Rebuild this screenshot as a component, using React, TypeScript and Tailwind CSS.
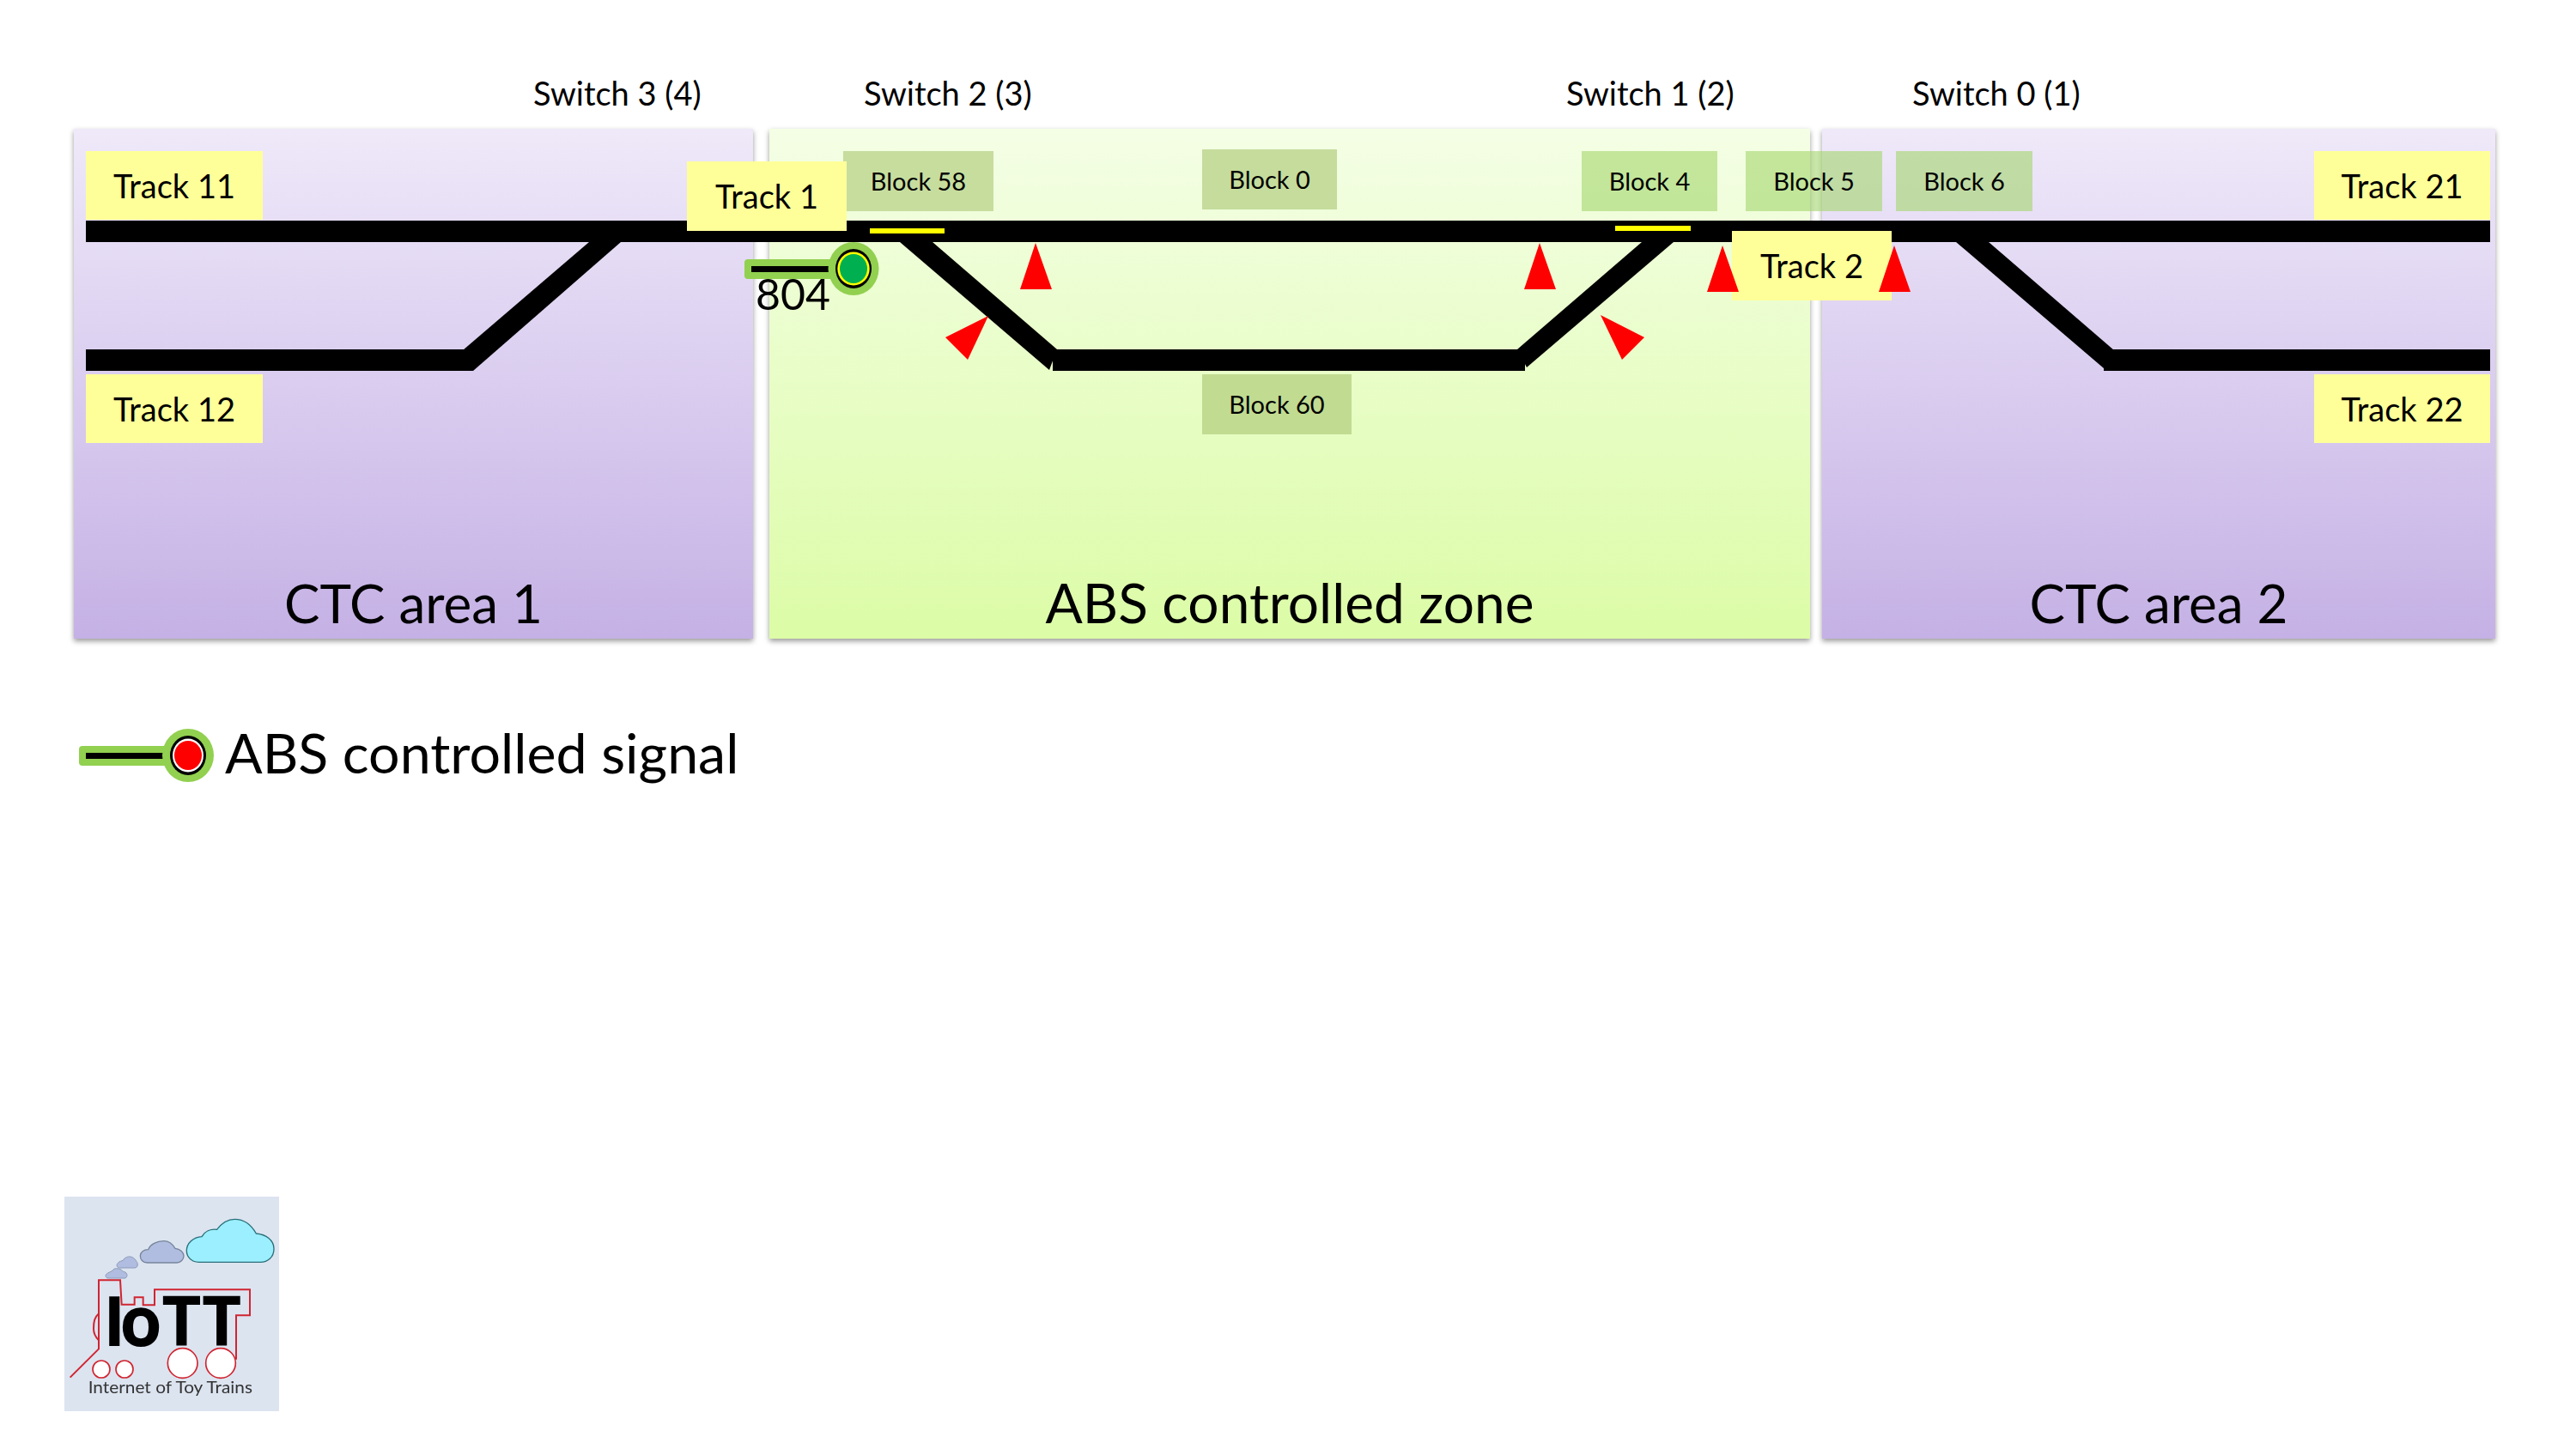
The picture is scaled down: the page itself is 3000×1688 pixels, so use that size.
// Track plan for the ABS zone between two CTC areas
const switches = [
  { text: 'Switch 3 (4)', className: 'left-[621px]' },
  { text: 'Switch 2 (3)', className: 'left-[1006px]' },
  { text: 'Switch 1 (2)', className: 'left-[1824px]' },
  { text: 'Switch 0 (1)', className: 'left-[2227px]' },
];

const blocks = [
  { text: 'Block 58', className: 'left-[982px] top-[176px] w-[175px] h-[70px] bg-[#c7dd9e]' },
  { text: 'Block 0', className: 'left-[1400px] top-[174px] w-[157px] h-[70px] bg-[#c5dc9c]' },
  { text: 'Block 60', className: 'left-[1400px] top-[436px] w-[174px] h-[70px] bg-[#c1db91]' },
  { text: 'Block 4', className: 'left-[1842px] top-[176px] w-[158px] h-[70px] bg-[#a3d56c]/60' },
  { text: 'Block 5', className: 'left-[2033px] top-[176px] w-[159px] h-[70px] bg-[#a3d56c]/60' },
  { text: 'Block 6', className: 'left-[2208px] top-[176px] w-[159px] h-[70px] bg-[#a3d56c]/60' },
];

const tracks = [
  { text: 'Track 11', className: 'left-[100px] top-[176px] w-[206px] h-[80px]' },
  { text: 'Track 12', className: 'left-[100px] top-[436px] w-[206px] h-[80px]' },
  { text: 'Track 21', className: 'left-[2695px] top-[176px] w-[205px] h-[80px]' },
  { text: 'Track 22', className: 'left-[2695px] top-[436px] w-[205px] h-[80px]' },
  { text: 'Track 1', className: 'left-[800px] top-[188px] w-[186px] h-[81px]' },
  { text: 'Track 2', className: 'left-[2017px] top-[269px] w-[186px] h-[81px]' },
];

function Signal({ ring, lamp }: { ring: string; lamp: string }) {
  return (
    <svg width="158" height="64" viewBox="0 0 158 64">
      <rect x="0" y="21" width="110" height="23" rx="4" fill="#92d050" />
      <rect x="8" y="29" width="96" height="7" fill="#000" />
      <ellipse cx="127" cy="32" rx="30" ry="31" fill="#92d050" />
      <ellipse cx="127" cy="32" rx="21" ry="23" fill="#000" />
      <ellipse cx="127" cy="32" rx="18" ry="19.5" fill={ring} />
      <ellipse cx="127" cy="32" rx="16" ry="17" fill={lamp} />
    </svg>
  );
}

function Logo() {
  return (
    <svg width="250" height="250" viewBox="45 43 750 750" className="ml-[75px] mt-[474px] blur-[0.5px]">
      <rect x="45" y="43" width="750" height="750" fill="#dce4f0" />
      <path d="M515 272 C485 272 472 250 472 232 C472 205 495 185 525 183 C535 165 555 155 578 158 C595 135 615 122 640 122 C675 122 700 145 715 172 C750 175 777 195 777 225 C777 255 755 272 730 272 Z" fill="#9befff" stroke="#2a6f78" strokeWidth="4" />
      <path d="M335 274 C318 274 310 262 310 250 C310 238 322 228 338 228 C345 210 368 198 392 198 C412 198 425 212 432 224 C450 226 462 238 462 250 C462 264 450 274 438 274 Z" fill="#b0bde0" stroke="#76859c" strokeWidth="4" />
      <path d="M238 292 C228 292 225 282 232 275 C238 268 245 268 250 266 C255 255 270 250 280 254 C290 258 295 265 297 270 C303 275 303 292 290 292 Z" fill="#b0bde0" stroke="#8c9ab8" strokeWidth="3" />
      <path d="M198 328 C188 328 185 315 197 310 C205 305 212 305 218 296 C228 292 245 295 250 305 C262 305 270 320 258 328 Z" fill="#b0bde0" stroke="#8c9ab8" strokeWidth="3" />
      <path d="M65 675 L165 575 L165 335 L240 335 L245 420 L290 420 L290 395 L320 395 L320 422 L360 422 L360 368 L693 368 L693 458 L645 458 L645 612" fill="none" stroke="#d02530" strokeWidth="6" />
      <path d="M165 452 C150 465 147 480 147 505 C147 525 155 535 165 545" fill="none" stroke="#d02530" strokeWidth="6" />
      <text x="180 238 385 525" y="565" fontSize="240" fontWeight="700" fontFamily="'Open Sans',sans-serif" fill="#000">IoTT</text>
      <circle cx="174" cy="646" r="30" fill="#fff" stroke="#d02530" strokeWidth="5" />
      <circle cx="255" cy="646" r="30" fill="#fff" stroke="#d02530" strokeWidth="5" />
      <circle cx="458" cy="625" r="52" fill="#fff" stroke="#d02530" strokeWidth="5" />
      <circle cx="591" cy="625" r="52" fill="#fff" stroke="#d02530" strokeWidth="5" />
      <text x="128" y="730" fontSize="58" fontFamily="Lato,sans-serif" textLength="574" lengthAdjust="spacingAndGlyphs" fill="#333">Internet of Toy Trains</text>
    </svg>
  );
}

export default function App() {
  return (
    <div className="relative flex flex-col w-[3000px] h-[1688px] bg-white text-black font-['Lato',sans-serif] overflow-hidden">
      {/* areas */}
      <div className="flex mt-[150px] ml-[86px] h-[594px]">
        <div className="flex items-end justify-center w-[791px] pb-[5px] bg-gradient-to-b from-[#efe9f9] to-[#c5b1e5] shadow-[0_3px_6px_rgba(0,0,0,0.4)]">
          <span className="text-[62px] leading-[74px]">CTC area 1</span>
        </div>
        <div className="flex items-end justify-center w-[1212px] ml-[19px] pb-[5px] bg-gradient-to-b from-[#f4fee5] to-[#dcfca6] shadow-[0_3px_6px_rgba(0,0,0,0.4)]">
          <span className="text-[64px] leading-[74px]">ABS controlled zone</span>
        </div>
        <div className="flex items-end justify-center w-[784px] ml-[14px] pb-[5px] bg-gradient-to-b from-[#efe9f9] to-[#c5b1e5] shadow-[0_3px_6px_rgba(0,0,0,0.4)]">
          <span className="text-[62px] leading-[74px]">CTC area 2</span>
        </div>
      </div>

      {/* legend */}
      <div className="flex items-center h-[80px] mt-[96px] ml-[92px] gap-[12px]">
        <Signal ring="#fff" lamp="#ff0000" />
        <span className="text-[64.5px] leading-[74px] -translate-y-[4px]">ABS controlled signal</span>
      </div>

      <Logo />

      {/* diagram labels */}
      {switches.map((s) => (
        <div key={s.text} className={`absolute top-[86px] text-[38px] leading-[44px] ${s.className}`}>
          {s.text}
        </div>
      ))}
      {blocks.map((b) => (
        <div key={b.text} className={`absolute flex items-center justify-center text-[29px] ${b.className}`}>
          {b.text}
        </div>
      ))}

      {/* rails */}
      <svg width="3000" height="1688" viewBox="0 0 3000 1688" className="absolute left-0 top-0">
        <rect x="100" y="257" width="2800" height="25" fill="#000" />
        <rect x="100" y="407" width="451" height="25" fill="#000" />
        <rect x="1226" y="407" width="550" height="25" fill="#000" />
        <rect x="2450" y="407" width="450" height="25" fill="#000" />
        <polygon points="686,282 723,282 551,432 539,408" fill="#000" />
        <polygon points="1048,282 1086,282 1231,407 1222,431" fill="#000" />
        <polygon points="1912,282 1949,282 1778,428 1767,407" fill="#000" />
        <polygon points="2278,282 2316,282 2462,408 2450,429" fill="#000" />
        <rect x="1013" y="266" width="87" height="6" fill="#ffff00" />
        <rect x="1881" y="263" width="88" height="6" fill="#ffff00" />
      </svg>

      {tracks.map((t) => (
        <div key={t.text} className={`absolute flex items-center justify-center bg-[#ffff99] text-[38px] ${t.className}`}>
          {t.text}
        </div>
      ))}

      <div className="absolute left-[867px] top-[281px]">
        <svg width="158" height="64" viewBox="0 0 158 64">
          <rect x="0" y="21" width="110" height="23" rx="4" fill="#92d050" />
          <rect x="8" y="29" width="92" height="7" fill="#000" />
          <ellipse cx="127" cy="32" rx="29.5" ry="31" fill="#92d050" />
          <ellipse cx="127" cy="32" rx="21" ry="23" fill="#000" />
          <ellipse cx="127" cy="32" rx="18.7" ry="19.5" fill="#ffff00" />
          <ellipse cx="127" cy="32" rx="16" ry="17" fill="#00b050" />
        </svg>
      </div>
      <div className="absolute left-[880px] top-[312px] text-[50px] leading-[60px]">804</div>

      {/* sensors */}
      <svg width="3000" height="1688" viewBox="0 0 3000 1688" className="absolute left-0 top-0">
        <polygon points="1206,283 1188,337 1225,337" fill="#ff0000" />
        <polygon points="1151,368 1101,393 1127,419" fill="#ff0000" />
        <polygon points="1793,283 1775,337 1812,337" fill="#ff0000" />
        <polygon points="1864,367 1915,393 1889,419" fill="#ff0000" />
        <polygon points="2006,286 1988,340 2025,340" fill="#ff0000" />
        <polygon points="2206,286 2188,340 2225,340" fill="#ff0000" />
      </svg>
    </div>
  );
}
